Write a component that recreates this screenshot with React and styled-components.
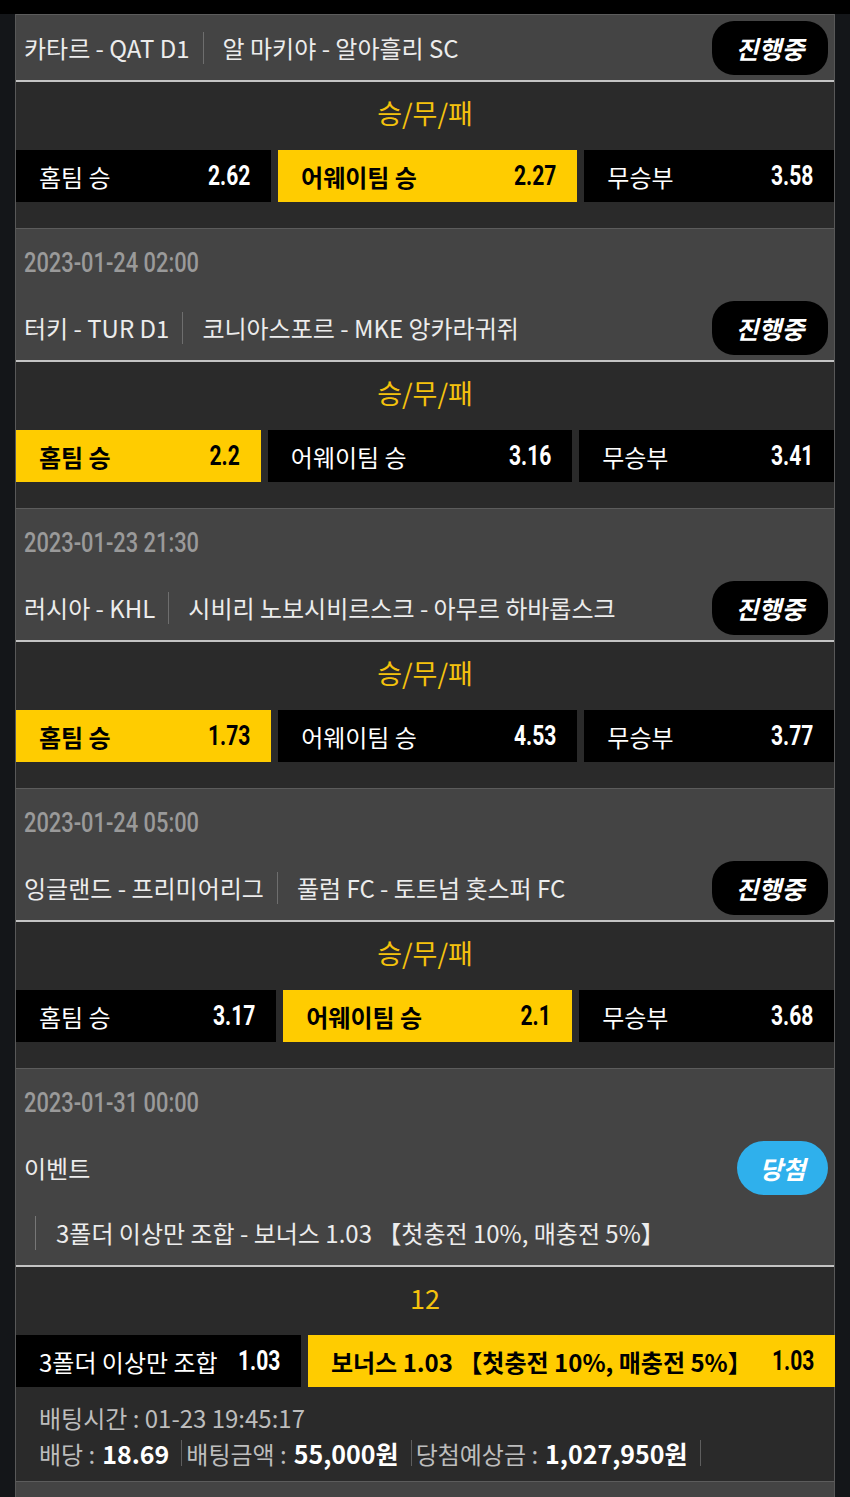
import styled, { createGlobalStyle } from 'styled-components';

const GlobalStyle = createGlobalStyle`
    html, body {
        margin: 0;
        padding: 0;
        background: #141619;
        overflow: hidden;
    }
    body {
        font-family: "Noto Sans CJK KR", "Noto Sans", sans-serif;
        color: #e8e8e8;
    }
`

const Page = styled.div`
    width: 850px;
    height: 1497px;
    overflow: hidden;
    background: #141619;
`

const TopBar = styled.div`
    height: 14px;
    background: #000;
`

const List = styled.div`
    margin: 0 15px;
    border-left: 1px solid #585858;
    border-right: 1px solid #585858;
`

const Card = styled.section`
    border-top: 1px solid #5c5c5c;
`

const Header = styled.div`
    background: #444;
    border-bottom: 2px solid #c4c4c4;
    padding: 0 6px 0 8px;
`

const DateRow = styled.div`
    height: 66px;
    display: flex;
    align-items: center;
`

const DateText = styled.span`
    display: inline-block;
    font-family: Roboto, sans-serif;
    font-size: 28px;
    font-weight: 500;
    color: #9a9a9a;
    transform: scaleX(0.78);
    transform-origin: left center;
    white-space: nowrap;
`

const TitleRow = styled.div`
    height: 65px;
    display: flex;
    align-items: center;
    font-size: 24px;
    color: #ececec;
    white-space: nowrap;
`

const Divider = styled.span`
    width: 1px;
    height: 32px;
    background: #6e6e6e;
    margin: 0 19px 0 13px;
`

const Badge = styled.span`
    margin-left: auto;
    width: ${p => (p.$won ? '91px' : '116px')};
    height: 54px;
    border-radius: ${p => (p.$won ? '27px' : '22px')};
    background: ${p => (p.$won ? '#2fb0ec' : '#000')};
    color: #fff;
    font-size: 25px;
    font-weight: 700;
    font-style: italic;
    display: flex;
    align-items: center;
    justify-content: center;
`

const DetailRow = styled.div`
    height: 65px;
    display: flex;
    align-items: center;
    padding-left: 11px;
`

const Detail = styled.div`
    border-left: 1px solid #777;
    padding-left: 20px;
    height: 34px;
    display: flex;
    align-items: center;
    font-size: 24px;
    color: #ececec;
    white-space: nowrap;
`

const Market = styled.div`
    background: #2a2a2a;
    padding-bottom: ${p => (p.$tight ? '0' : '26px')};
`

const MarketTitle = styled.div`
    height: 60px;
    margin-bottom: 8px;
    display: flex;
    align-items: center;
    justify-content: center;
    color: #f4c20d;
    font-size: 27px;
`

const OddsRow = styled.div`
    display: flex;
    gap: 7px;
    height: 52px;
`

const OddsBox = styled.div`
    flex: 1 1 auto;
    display: flex;
    align-items: center;
    justify-content: space-between;
    padding: 0 21px 0 23px;
    background: ${p => (p.$picked ? '#ffcc00' : '#000')};
    color: ${p => (p.$picked ? '#000' : '#fff')};
    white-space: nowrap;
`

const Label = styled.span`
    font-size: 24px;
    font-weight: ${p => (p.$picked ? 700 : 400)};
`

const Value = styled.span`
    display: inline-block;
    margin-left: 8px;
    font-family: Roboto, sans-serif;
    font-size: 27px;
    font-weight: 700;
    transform: scaleX(0.78);
    transform-origin: right center;
`

const BetInfo = styled.div`
    padding: 12px 0 10px 23px;
`

const InfoLine = styled.div`
    height: 36px;
    display: flex;
    align-items: center;
    font-size: 24px;
    color: #bdbdbd;
    white-space: nowrap;
`

const Strong = styled.b`
    color: #fff;
    font-size: 25px;
    font-weight: 700;
    margin-left: 7px;
`

const Sep = styled.span`
    display: inline-block;
    width: 1px;
    height: 26px;
    background: #5e5e5e;
    margin: 0 4px 0 12px;
`

const NextCard = styled.div`
    background: #444;
    height: 66px;
    border-top: 1px solid #5c5c5c;
`

const cards = [
    {
        league: '카타르 - QAT D1', match: '알 마키야 - 알아흘리 SC', market: '승/무/패', pick: 1,
        odds: [['홈팀 승', '2.62'], ['어웨이팀 승', '2.27'], ['무승부', '3.58']],
    },
    {
        date: '2023-01-24 02:00', league: '터키 - TUR D1', match: '코니아스포르 - MKE 앙카라귀쥐', market: '승/무/패', pick: 0,
        odds: [['홈팀 승', '2.2'], ['어웨이팀 승', '3.16'], ['무승부', '3.41']],
    },
    {
        date: '2023-01-23 21:30', league: '러시아 - KHL', match: '시비리 노보시비르스크 - 아무르 하바롭스크', market: '승/무/패', pick: 0,
        odds: [['홈팀 승', '1.73'], ['어웨이팀 승', '4.53'], ['무승부', '3.77']],
    },
    {
        date: '2023-01-24 05:00', league: '잉글랜드 - 프리미어리그', match: '풀럼 FC - 토트넘 홋스퍼 FC', market: '승/무/패', pick: 1,
        odds: [['홈팀 승', '3.17'], ['어웨이팀 승', '2.1'], ['무승부', '3.68']],
    },
    {
        date: '2023-01-31 00:00', league: '이벤트', won: true, market: '12', pick: 1,
        detail: '3폴더 이상만 조합 - 보너스 1.03 【첫충전 10%, 매충전 5%】',
        odds: [['3폴더 이상만 조합', '1.03'], ['보너스 1.03 【첫충전 10%, 매충전 5%】', '1.03']],
        bet: { time: '01-23 19:45:17', rate: '18.69', amount: '55,000원', expect: '1,027,950원' },
    },
]

function BetCard({ c }) {
    return (
        <Card>
            <Header>
                {c.date && (
                    <DateRow>
                        <DateText>{c.date}</DateText>
                    </DateRow>
                )}
                <TitleRow>
                    <span>{c.league}</span>
                    {c.match && <Divider />}
                    {c.match && <span>{c.match}</span>}
                    <Badge $won={c.won}>{c.won ? '당첨' : '진행중'}</Badge>
                </TitleRow>
                {c.detail && (
                    <DetailRow>
                        <Detail>{c.detail}</Detail>
                    </DetailRow>
                )}
            </Header>
            <Market $tight={!!c.bet}>
                <MarketTitle>{c.market}</MarketTitle>
                <OddsRow>
                    {c.odds.map(([label, value], i) => (
                        <OddsBox key={i} $picked={i === c.pick}>
                            <Label $picked={i === c.pick}>{label}</Label>
                            <Value>{value}</Value>
                        </OddsBox>
                    ))}
                </OddsRow>
                {c.bet && (
                    <BetInfo>
                        <InfoLine>배팅시간 : {c.bet.time}</InfoLine>
                        <InfoLine>
                            배당 :<Strong>{c.bet.rate}</Strong>
                            <Sep />배팅금액 :<Strong>{c.bet.amount}</Strong>
                            <Sep />당첨예상금 :<Strong>{c.bet.expect}</Strong>
                            <Sep />
                        </InfoLine>
                    </BetInfo>
                )}
            </Market>
        </Card>
    )
}

export default function App() {
    return (
        <>
            <GlobalStyle />
            <Page>
                <TopBar />
                <List>
                    {cards.map((c, i) => <BetCard key={i} c={c} />)}
                    <NextCard />
                </List>
            </Page>
        </>
    )
}
